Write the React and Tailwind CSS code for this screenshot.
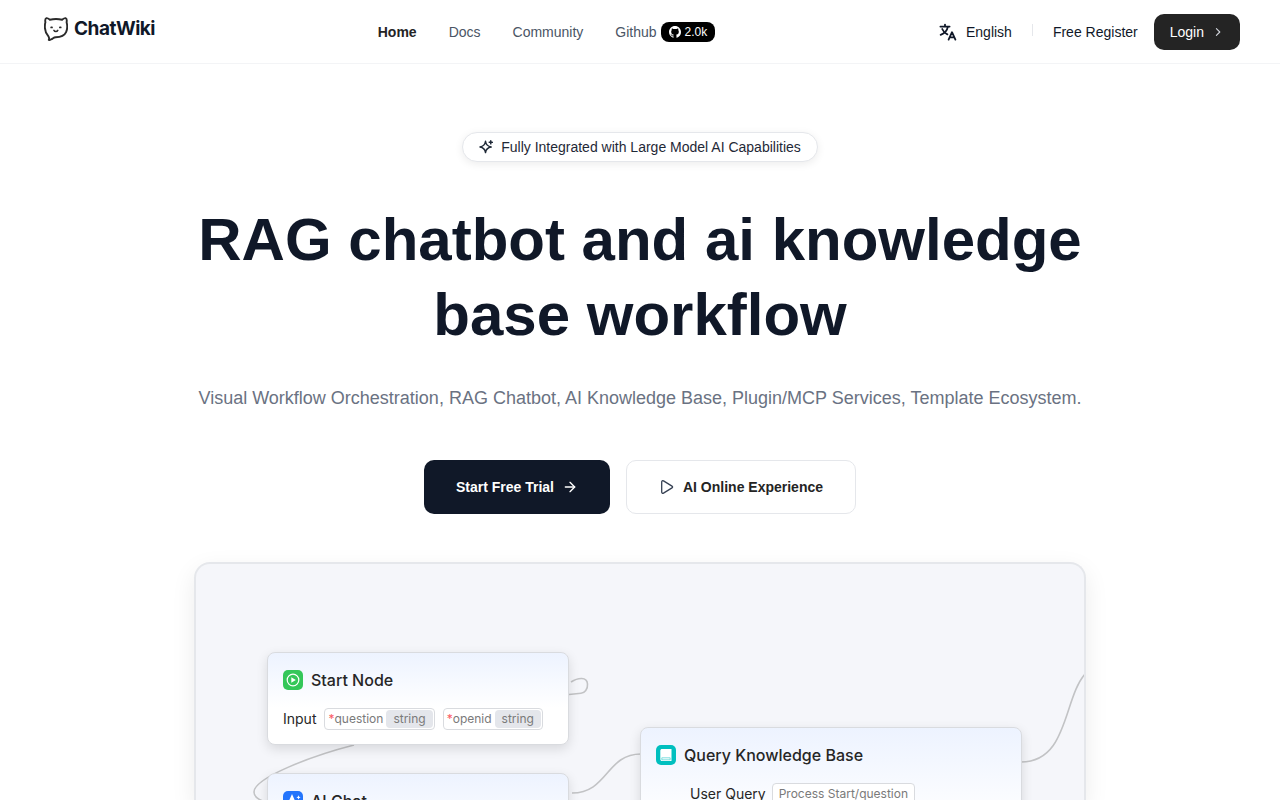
import React from 'react'
import { ArrowRight } from 'lucide-react'

const navLinks = [
  { label: 'Home', active: true },
  { label: 'Docs' },
  { label: 'Community' },
]

const edges = [
  'M375 118 C382 113.5 391 112.5 391.5 120 C392 125 388.5 129 385 129.3 L373 130.5',
  'M158 181 C115 192 58 214 58 228 C58 234 65 237 76 240',
  'M376 229 C412 229 410 190 445 190',
  'M825 198 C873 198 867 133 890 109',
]

function Logo() {
  return (
    <a href="#" className="flex items-center gap-1.5 pb-1.5 pl-1">
      <svg viewBox="0 0 24 24" className="size-6" fill="none" stroke="#2b2b2b" strokeWidth="1.9" strokeLinecap="round" strokeLinejoin="round">
        <path d="M1.4 5.3C1 3.2 1.4 1.6 2.4 1.2C3.5.8 4.8 1.9 5.8 2.7C9.8 1.8 14.2 1.8 18.2 2.7C19.2 1.9 20.5.8 21.6 1.2C22.6 1.6 23 3.2 22.6 5.3C23.4 8.3 23.4 12.3 22.1 15.2C20.4 18.8 17 20.2 11.8 20.2C10 20.2 9.2 21.2 7.8 22.1C6.7 22.9 5.6 23.1 4.8 22.8C5.5 21.6 5.1 20.3 4.1 18.8C2.2 16.6 1.1 13.8.9 10.8C.8 8.8.9 6.9 1.4 5.3Z" />
        <path d="M9.9 13.4C10.7 14.9 13 14.9 13.8 13.4" strokeWidth="1.5" />
        <path d="M7.2 10.4H8M15.9 10.4H16.7" strokeWidth="1.8" />
      </svg>
      <span className="font-['Inter',sans-serif] text-[19px] leading-7 font-bold tracking-tight text-[#101828]">ChatWiki</span>
    </a>
  )
}

function GithubMark() {
  return (
    <svg viewBox="0 0 16 16" className="size-3" fill="currentColor">
      <path d="M8 0C3.58 0 0 3.58 0 8c0 3.54 2.29 6.53 5.47 7.59.4.07.55-.17.55-.38 0-.19-.01-.82-.01-1.49-2.01.37-2.53-.49-2.69-.94-.09-.23-.48-.94-.82-1.13-.28-.15-.68-.52-.01-.53.63-.01 1.08.58 1.23.82.72 1.21 1.87.87 2.33.66.07-.52.28-.87.51-1.07-1.78-.2-3.64-.89-3.64-3.95 0-.87.31-1.59.82-2.15-.08-.2-.36-1.02.08-2.12 0 0 .67-.21 2.2.82A7.6 7.6 0 0 1 8 3.87c.68 0 1.36.09 2 .26 1.53-1.04 2.2-.82 2.2-.82.44 1.1.16 1.92.08 2.12.51.56.82 1.27.82 2.15 0 3.07-1.87 3.75-3.65 3.95.29.25.54.73.54 1.48 0 1.07-.01 1.93-.01 2.2 0 .21.15.46.55.38A8.01 8.01 0 0 0 16 8c0-4.42-3.58-8-8-8z" />
    </svg>
  )
}

function TranslateIcon() {
  return (
    <svg viewBox="0 0 20 20" className="size-5" fill="none" stroke="currentColor" strokeWidth="1.8" strokeLinecap="round" strokeLinejoin="round">
      <path d="M2.4 4.6H11.6M7 2.6V4.6" />
      <path d="M9.8 4.8C9.1 8.6 6.4 11.4 2.6 12.8" />
      <path d="M4.2 7C5.2 9.3 7.2 11.4 9.4 12.3" />
      <path d="M10.6 17.6L14 10.2L17.4 17.6M11.8 15.4H16.2" />
    </svg>
  )
}

function SparkleIcon() {
  return (
    <svg viewBox="0.5 1.2 14.4 14.4" className="size-3.5" fill="none" stroke="#1f2937" strokeWidth="1.5" strokeLinecap="round" strokeLinejoin="round">
      <path d="M7.2 2.5C7.7 6.3 9.2 7.7 13 8.4C9.2 9.1 7.7 10.5 7.2 14.1C6.7 10.5 5.2 9.1 1.5 8.4C5.2 7.7 6.7 6.3 7.2 2.5Z" />
      <path d="M12.6 2V5.2M11 3.6H14.2" />
    </svg>
  )
}

function ChevronIcon() {
  return (
    <svg viewBox="0 0 12 12" className="size-3" fill="none" stroke="#d1d5dc" strokeWidth="1.1" strokeLinecap="round" strokeLinejoin="round">
      <path d="M4.4 2.6L7.8 6L4.4 9.4" />
    </svg>
  )
}

function PlayIcon() {
  return (
    <svg viewBox="0 0 16 16" className="size-4" fill="none" stroke="#364153" strokeWidth="1.3" strokeLinejoin="round">
      <path d="M2.7 2.9C2.7 1.9 3.6 1.4 4.5 1.9L13 7.1C13.8 7.6 13.8 8.4 13 8.9L4.5 14.1C3.6 14.6 2.7 14.1 2.7 13.1Z" />
    </svg>
  )
}

function StartIcon() {
  return (
    <svg viewBox="0 0 20 20" className="size-5">
      <rect width="20" height="20" rx="5" fill="#34c759" />
      <circle cx="10" cy="10" r="5.8" fill="none" stroke="#fff" strokeWidth="1.2" />
      <path d="M8.3 7.3L12.8 10L8.3 12.7Z" fill="#fff" />
    </svg>
  )
}

function ChatIcon() {
  return (
    <svg viewBox="0 0 20 20" className="size-5">
      <rect width="20" height="20" rx="5" fill="#2475fc" />
      <path d="M5 15L9 6L13 15M15.5 9.5V15" fill="none" stroke="#fff" strokeWidth="2.4" />
      <path d="M15.5 4.2L16.2 5.8L17.6 6.4L16.2 7L15.5 8.4L14.8 7L13.4 6.4L14.8 5.8Z" fill="#fff" />
    </svg>
  )
}

function BookIcon() {
  return (
    <svg viewBox="0 0 20 20" className="size-5">
      <rect width="20" height="20" rx="5" fill="#00bfbf" />
      <path d="M6 4H15.5V16H6.2C5 16 4.3 15.2 4.3 14.2V5.7C4.3 4.7 5 4 6 4Z" fill="#fff" />
      <path d="M5.8 12.8H14.2V14.8H5.8Z" fill="none" stroke="#00bfbf" strokeWidth=".5" />
    </svg>
  )
}

function Node({ icon, title, className = '', children }) {
  return (
    <div className={`absolute rounded-lg border border-[#d9dbdf] bg-white bg-linear-to-b from-[#edf3ff] to-white to-60% px-[15px] pt-[15px] shadow-[0_4px_12px_rgba(0,0,0,0.12)] ${className}`}>
      <div className="flex items-center gap-2">
        {icon}
        <h3 className="text-base leading-6 font-medium text-[#262626]">{title}</h3>
      </div>
      {children}
    </div>
  )
}

function Param({ name }) {
  return (
    <span className="flex h-[22px] items-center gap-[3px] rounded-sm border border-[#d9dbdf] bg-white pr-px pl-[3px] text-xs text-[#7a7a7a]">
      <span><span className="text-[#fb5a63]">*</span>{name}</span>
      <span className="rounded-sm bg-[#e4e6eb] px-[7px] leading-[18px]">string</span>
    </span>
  )
}

function WorkflowCanvas() {
  return (
    <div className="relative mt-12 min-h-60 w-full max-w-[892px] flex-1 overflow-hidden rounded-t-2xl border-2 border-b-0 border-gray-200 bg-[#f5f6fa] font-['Inter',sans-serif] shadow-[0_8px_24px_rgba(0,0,0,0.08)]">
      <svg className="absolute top-0 left-0 h-60 w-[892px]" fill="none" stroke="#c2c3c5" strokeWidth="1.6">
        {edges.map((d) => <path key={d} d={d} />)}
      </svg>
      <Node icon={<StartIcon />} title="Start Node" className="top-[88px] left-[71px] h-[93px] w-[302px]">
        <div className="mt-4 flex items-center gap-2 text-sm text-[#262626]">
          <span>Input</span>
          <Param name="question" />
          <Param name="openid" />
        </div>
      </Node>
      <Node icon={<ChatIcon />} title="AI Chat" className="top-[209px] left-[71px] h-28 w-[302px]" />
      <Node icon={<BookIcon />} title="Query Knowledge Base" className="top-[163px] left-[444px] h-40 w-[382px]">
        <div className="mt-4 flex items-center gap-1.5 pl-[34px] text-sm text-[#262626]">
          <span>User Query</span>
          <span className="rounded-sm border border-[#d9dbdf] bg-white px-1.5 text-xs leading-5 text-[#7a7a7a]">Process Start/question</span>
        </div>
      </Node>
    </div>
  )
}

export default function App() {
  return (
    <div className="flex h-screen flex-col overflow-hidden bg-white font-['Liberation_Sans',Arial,sans-serif]">
      <header className="shrink-0 border-b border-gray-100">
        <div className="mx-auto flex h-[63px] max-w-[1280px] items-center justify-between px-10 text-sm">
          <Logo />
          <nav className="flex items-center gap-8 text-[#4a5565]">
            {navLinks.map((link) => (
              <a key={link.label} href="#" className={link.active ? 'font-bold text-[#242424]' : ''}>{link.label}</a>
            ))}
            <a href="#" className="flex items-center gap-1">
              Github
              <span className="flex h-5 items-center gap-1 rounded-lg bg-black px-2 text-xs text-white">
                <GithubMark />
                2.0k
              </span>
            </a>
          </nav>
          <div className="flex items-center text-[#101828]">
            <button className="flex items-center gap-2">
              <TranslateIcon />
              English
            </button>
            <span className="mx-5 mb-1 h-3 w-px bg-gray-200" />
            <a href="#">Free Register</a>
            <button className="ml-4 flex h-9 items-center gap-2 rounded-[10px] bg-[#242424] px-4 text-white">
              Login
              <ChevronIcon />
            </button>
          </div>
        </div>
      </header>

      <main className="flex min-h-0 flex-1 flex-col items-center px-10 pt-[68px]">
        <div className="flex h-[30px] shrink-0 items-center gap-2 rounded-full border border-gray-200 bg-white px-4 text-sm text-[#1f2937] shadow-[0_2px_8px_rgba(0,0,0,0.08)]">
          <SparkleIcon />
          Fully Integrated with Large Model AI Capabilities
        </div>
        <h1 className="mt-10 max-w-[900px] text-center text-[60px] leading-[75px] font-bold text-[#101828]">
          RAG chatbot and ai knowledge base workflow
        </h1>
        <p className="mt-8 text-center text-lg leading-7 text-[#6a7282]">
          Visual Workflow Orchestration, RAG Chatbot, AI Knowledge Base, Plugin/MCP Services, Template Ecosystem.
        </p>
        <div className="mt-12 flex shrink-0 gap-4 text-sm font-bold">
          <button className="flex h-[54px] items-center gap-2 rounded-[10px] bg-[#101828] px-8 text-white">
            Start Free Trial
            <ArrowRight className="size-4" />
          </button>
          <button className="flex h-[54px] items-center gap-2 rounded-[10px] border border-gray-200 bg-white px-8 text-[#242424]">
            <PlayIcon />
            AI Online Experience
          </button>
        </div>
        <WorkflowCanvas />
      </main>
    </div>
  )
}
